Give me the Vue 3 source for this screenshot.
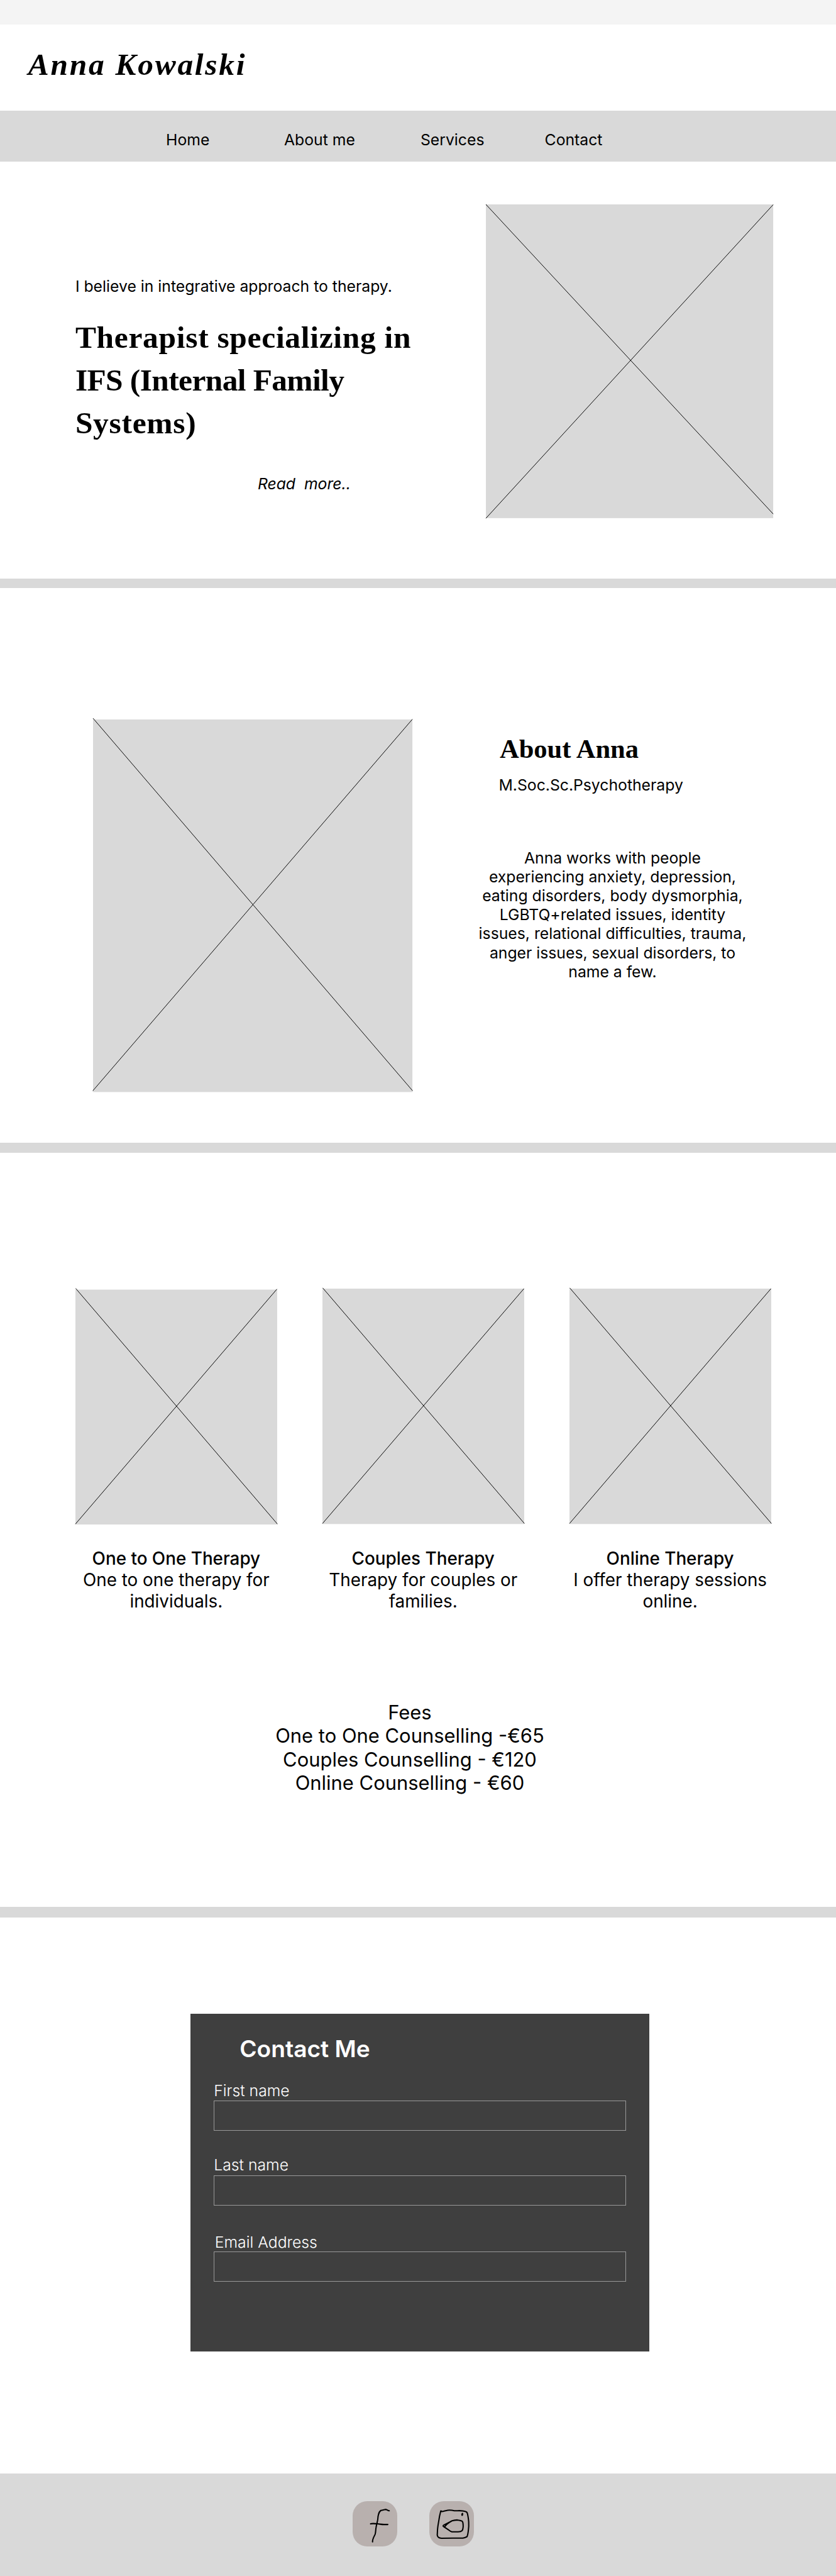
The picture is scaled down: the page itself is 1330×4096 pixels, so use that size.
<script setup>
const links = ['Home', 'About me', 'Services', 'Contact']

const services = [
  { title: 'One to One Therapy', lines: ['One to one therapy for', 'individuals.'], low: true },
  { title: 'Couples Therapy', lines: ['Therapy for couples or', 'families.'] },
  { title: 'Online Therapy', lines: ['I offer therapy sessions', 'online.'] },
]

const fees = [
  'Fees',
  'One to One Counselling -€65',
  'Couples Counselling - €120',
  'Online Counselling - €60',
]

const bio = [
  'Anna works with people',
  'experiencing anxiety, depression,',
  'eating disorders, body dysmorphia,',
  'LGBTQ+related issues, identity',
  'issues, relational difficulties, trauma,',
  'anger issues, sexual disorders, to',
  'name a few.',
]

const fields = [
  { id: 'first', label: 'First name' },
  { id: 'last', label: 'Last name' },
  { id: 'email', label: 'Email Address' },
]
</script>

<template>
  <div class="page">
    <div class="strip"></div>
    <header class="header"><div class="brand">Anna Kowalski</div></header>
    <nav class="nav">
      <a v-for="link in links" :key="link" class="nav-link">{{ link }}</a>
    </nav>

    <section class="hero">
      <div class="hero-copy">
        <p class="body-text">I believe in integrative approach to therapy.</p>
        <h1 class="hero-title">
          <span class="line wide">Therapist specializing in</span>
          <span class="line tight">IFS (Internal Family</span>
          <span class="line wide">Systems)</span>
        </h1>
        <a class="read-more">Read&nbsp; more..</a>
      </div>
      <svg class="photo hero-photo" viewBox="0 0 591 645" preserveAspectRatio="none">
        <rect width="591" height="645" fill="#d9d9d9" />
        <path d="M0 0L591 636.5M0 645.5L591 0.5" />
      </svg>
    </section>

    <div class="divider"></div>

    <section class="about">
      <svg class="photo about-photo" viewBox="0 0 657 766" preserveAspectRatio="none">
        <rect width="657" height="766" fill="#d9d9d9" />
        <path d="M0 -2.5L657.5 763.5M-0.5 763.5L657 -0.5" />
      </svg>
      <div class="about-copy">
        <h2 class="about-title">About Anna</h2>
        <p class="body-text degree">M.Soc.Sc.Psychotherapy</p>
        <p class="bio"><span v-for="l in bio" :key="l" class="line">{{ l }}</span></p>
      </div>
    </section>

    <div class="divider"></div>

    <section class="services">
      <div class="cards">
        <article v-for="s in services" :key="s.title" class="card">
          <svg class="photo card-photo" viewBox="0 0 415 484" preserveAspectRatio="none">
            <rect :y="s.low ? 2 : 0" width="415" :height="s.low ? 483 : 484" fill="#d9d9d9" />
            <path :d="s.low ? 'M0.5 -0.5L415.5 484M0 484L414.5 1' : 'M0.5 -1.5L415.5 483M0 483L414.5 0'" />
          </svg>
          <h3 class="card-title">{{ s.title }}</h3>
          <p class="card-text"><span v-for="l in s.lines" :key="l" class="line">{{ l }}</span></p>
        </article>
      </div>
      <div class="fees"><span v-for="f in fees" :key="f" class="line">{{ f }}</span></div>
    </section>

    <div class="divider thick"></div>

    <section class="contact">
      <form class="form">
        <h2 class="form-title">Contact Me</h2>
        <div v-for="f in fields" :key="f.id" class="field" :class="f.id">
          <label class="label" :for="f.id">{{ f.label }}</label>
          <input :id="f.id" class="input" type="text" />
        </div>
      </form>
    </section>

    <footer class="footer">
      <a class="social">
        <svg viewBox="0 0 276 276">
          <path d="M226 59C219 61 214 52 203 51C193 53 185 55 175 57C167 63 161 72 159 85C155 97 157 110 153 123C150 138 147 148 145 160C142 175 143 190 139 204C134 216 122 232 123 251" />
          <path d="M111 140C124 136 138 139 152 140C168 141 178 144 193 144L217 144" />
        </svg>
      </a>
      <a class="social">
        <svg viewBox="0 0 276 276">
          <path d="M71 60C67 76 62 92 60 112C56 138 50 164 50 190L49 209C50 220 61 228 75 229L145 228L207 228C216 225 226 224 233 219C239 205 239 193 241 180C244 160 244 145 243 127C241 105 238 82 233 70C227 62 216 62 205 60C188 57 170 60 154 59C142 56 127 55 113 56C99 58 88 64 78 64L71 60" />
          <path d="M95 157L110 141C123 130 131 125 140 121C154 118 163 117 173 116C183 118 194 119 203 124C210 130 208 143 209 155C208 164 209 172 203 181C196 188 189 189 178 189L139 189C130 187 124 181 117 176L88 157C82 153 85 149 94 145C107 139 119 133 132 126" />
          <path d="M205 76L201 80L202 87L205 84Z" />
        </svg>
      </a>
    </footer>
  </div>
</template>

<style>
body {
  margin: 0;
  background: #ffffff;
}
</style>

<style scoped>
.page {
  --u: 0.7734px;
  width: 100%;
  overflow: hidden;
  color: #000000;
  font-family: Inter, sans-serif;
}
.page * {
  box-sizing: border-box;
}
h1, h2, h3, p {
  margin: 0;
}
.line {
  display: block;
  white-space: nowrap;
}
.strip {
  height: calc(50 * var(--u));
  background: #f4f4f4;
}
.header {
  height: calc(178 * var(--u));
  padding: calc(39.7 * var(--u)) 0 0 calc(58 * var(--u));
}
.brand {
  font: italic 700 calc(64 * var(--u)) / calc(88 * var(--u)) 'Liberation Serif', serif;
  letter-spacing: calc(3.5 * var(--u));
}
.nav {
  display: grid;
  grid-template-columns: calc(243 * var(--u)) calc(280.5 * var(--u)) calc(255.5 * var(--u)) auto;
  height: calc(104 * var(--u));
  padding: calc(41.6 * var(--u)) 0 0 calc(341.5 * var(--u));
  background: #d9d9d9;
}
.nav-link, .body-text, .read-more {
  font-size: calc(32 * var(--u));
  line-height: calc(38.7 * var(--u));
  white-space: nowrap;
}
.photo {
  display: block;
  flex: none;
  overflow: visible;
}
.photo path {
  fill: none;
  stroke: #000000;
  stroke-width: 1.25;
}
.hero {
  display: flex;
  height: calc(857 * var(--u));
  padding-left: calc(155 * var(--u));
}
.hero-copy {
  width: calc(844 * var(--u));
  padding-top: calc(238.8 * var(--u));
}
.hero-title {
  margin-top: calc(40.5 * var(--u));
  font: 700 calc(64 * var(--u)) / calc(88.2 * var(--u)) 'Liberation Serif', serif;
}
.wide {
  letter-spacing: calc(0.9 * var(--u));
}
.tight {
  letter-spacing: calc(-0.8 * var(--u));
}
.read-more {
  display: block;
  margin: calc(61.3 * var(--u)) 0 0 calc(375 * var(--u));
  font-style: italic;
}
.hero-photo {
  width: calc(591 * var(--u));
  height: calc(645 * var(--u));
  margin-top: calc(88 * var(--u));
}
.divider {
  height: calc(20 * var(--u));
  background: #d9d9d9;
}
.thick {
  height: calc(22 * var(--u));
}
.about {
  display: flex;
  height: calc(1141 * var(--u));
  padding-left: calc(191 * var(--u));
}
.about-photo {
  width: calc(657 * var(--u));
  height: calc(766 * var(--u));
  margin-top: calc(270 * var(--u));
}
.about-copy {
  width: calc(560 * var(--u));
  margin-left: calc(132 * var(--u));
  padding-top: calc(297.4 * var(--u));
}
.about-title {
  padding-left: calc(48 * var(--u));
  font: 700 calc(55 * var(--u)) / calc(66 * var(--u)) 'Liberation Serif', serif;
}
.degree {
  margin-top: calc(23.2 * var(--u));
  padding-left: calc(46 * var(--u));
}
.bio {
  margin-top: calc(110.2 * var(--u));
  font-size: calc(32 * var(--u));
  line-height: calc(38.9 * var(--u));
  text-align: center;
}
.services {
  height: calc(1550 * var(--u));
  padding: calc(280 * var(--u)) 0 0 calc(155 * var(--u));
}
.cards {
  display: flex;
  gap: calc(93 * var(--u));
}
.card {
  width: calc(415 * var(--u));
  font-size: calc(36 * var(--u));
  line-height: calc(43.6 * var(--u));
  text-align: center;
}
.card-photo {
  width: calc(415 * var(--u));
  height: calc(484 * var(--u));
  margin-bottom: calc(49.9 * var(--u));
}
.card-title {
  font-size: inherit;
  font-weight: 500;
}
.fees {
  width: calc(600 * var(--u));
  margin: calc(182.1 * var(--u)) 0 0 calc(388 * var(--u));
  font-size: calc(40 * var(--u));
  line-height: calc(48 * var(--u));
  text-align: center;
}
.contact {
  height: calc(1144 * var(--u));
  padding: calc(198 * var(--u)) 0 0 calc(392 * var(--u));
}
.form {
  width: calc(944 * var(--u));
  height: calc(694 * var(--u));
  padding: calc(44.5 * var(--u)) calc(48 * var(--u)) 0;
  background: #3f3f3f;
  color: #ffffff;
}
.form-title {
  padding-left: calc(53 * var(--u));
  font-size: calc(48 * var(--u));
  font-weight: 600;
  line-height: calc(58 * var(--u));
}
.field {
  display: flex;
  flex-direction: column;
  justify-content: space-between;
}
.first {
  height: calc(99 * var(--u));
  margin-top: calc(37.5 * var(--u));
}
.last {
  height: calc(102 * var(--u));
  margin-top: calc(54 * var(--u));
}
.email {
  height: calc(100 * var(--u));
  margin-top: calc(56 * var(--u));
}
.email .label {
  padding-left: calc(2 * var(--u));
}
.label {
  font-size: calc(32 * var(--u));
  font-weight: 300;
  line-height: calc(38.7 * var(--u));
}
.input {
  flex: none;
  width: 100%;
  height: calc(62 * var(--u));
  border: 1px solid #999999;
  border-radius: 0;
  background: transparent;
  color: inherit;
  outline: none;
}
.footer {
  display: flex;
  gap: calc(66 * var(--u));
  height: calc(210 * var(--u));
  padding: calc(57 * var(--u)) 0 0 calc(725 * var(--u));
  background: #d9d9d9;
}
.social {
  width: calc(92 * var(--u));
  height: calc(92 * var(--u));
  border-radius: calc(30 * var(--u));
  background: #b8b0ae;
}
.social svg {
  display: block;
  width: 100%;
  height: 100%;
  fill: none;
  stroke: #000000;
  stroke-width: 8;
  stroke-linecap: round;
  stroke-linejoin: round;
}
</style>
